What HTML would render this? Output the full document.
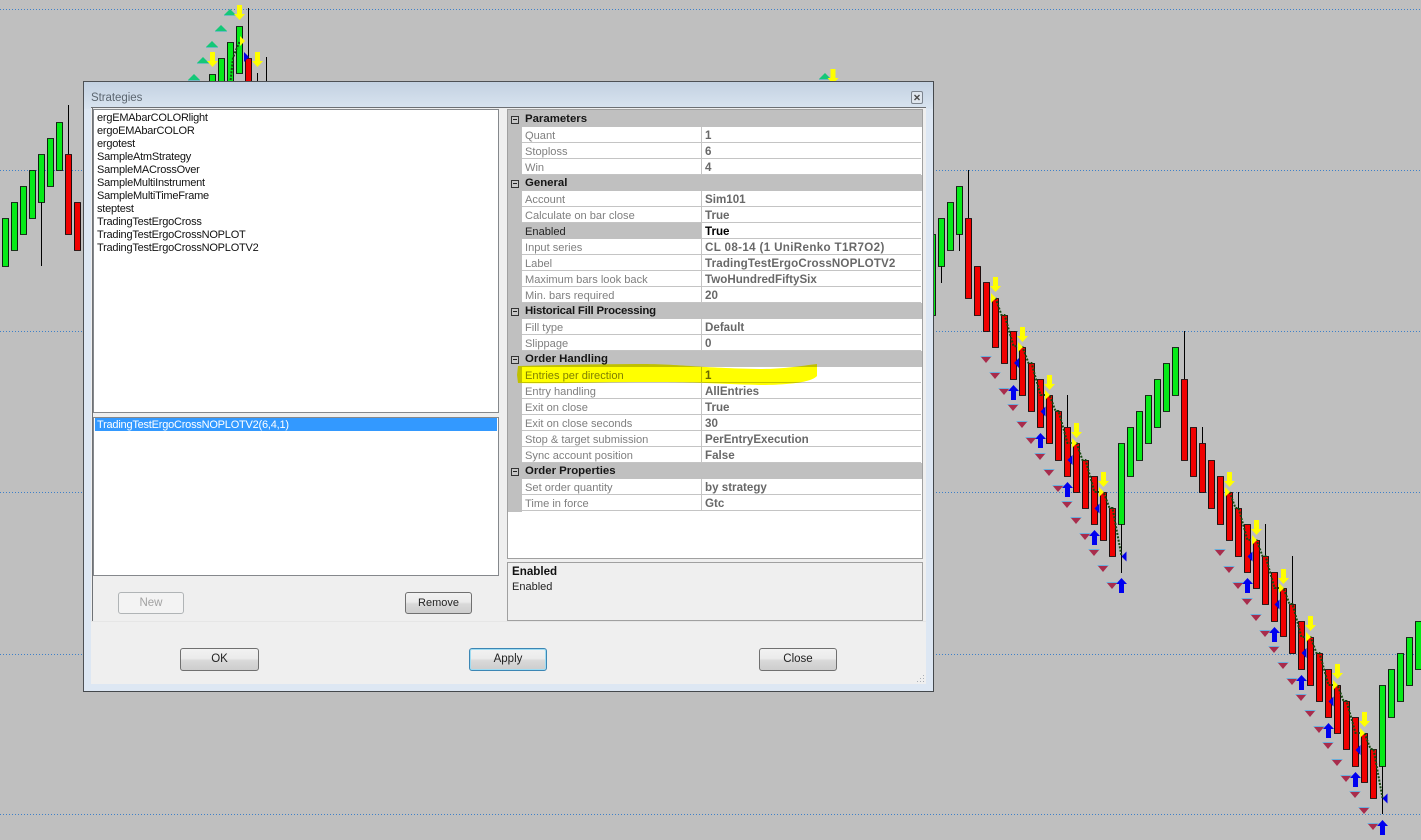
<!DOCTYPE html>
<html><head><meta charset="utf-8"><title>Strategies</title>
<style>
html,body{margin:0;padding:0;background:#bfbfbf}
#r{position:relative;width:1421px;height:840px;overflow:hidden;background:#bfbfbf;font:11px/13px "Liberation Sans",sans-serif;color:#111}
#r svg.c{position:absolute;left:0;top:0}
.a{position:absolute;box-sizing:border-box}
#win{left:83px;top:81px;width:851px;height:611px;border:1px solid #4d5054;background:#dde7f3;border-right-color:#44484c;border-bottom-color:#44484c}
#tb{left:0;top:0;width:849px;height:27px;background:linear-gradient(#c3d1e1,#d9e4f0)}
#cl{left:91px;top:107px;width:835px;height:577px;background:#efefef}
.t{position:absolute;white-space:nowrap}
.lb{background:#fff;border:1px solid #85888c}
.btn{position:absolute;box-sizing:border-box;border:1px solid #707070;border-radius:3px;background:linear-gradient(#f2f2f2 0,#ebebeb 45%,#d9d9d9 55%,#cdcdcd 100%);text-align:center;color:#222;font-size:11.5px}
.row{position:absolute;left:522px;width:399px;height:16px;background:#fff;border-bottom:1px solid #c4c4c4;box-sizing:border-box}
.row i{position:absolute;left:179px;top:0;width:1px;height:16px;background:#c4c4c4}
.row b,.row span{position:absolute;top:2px;line-height:14px;white-space:nowrap}
.row span{left:3px;color:#7f7f7f;font-size:11.1px}
.row b{left:183px;color:#686868;font-size:11.6px}
.cat{position:absolute;left:508px;width:414px;height:16px;background:#c0c0c0}
.cat b{position:absolute;left:17px;top:1px;line-height:15px;font-size:11.4px;color:#151515;white-space:nowrap}
.cat u{position:absolute;left:3px;top:5px;width:8px;height:8px;box-sizing:border-box;border:1px solid #333;background:#c8c8c8}
.cat u:after{content:"";position:absolute;left:1px;top:2px;width:4px;height:1px;background:#222}
</style></head><body><div id="r">
<svg class="c" width="1421" height="840" viewBox="0 0 1421 840">
<defs>
<polygon id="ya" fill="#ffff00" points="-2.5,0 2.5,0 2.5,9 5.5,9 0,15 -5.5,9 -2.5,9"/>
<polygon id="ba" fill="#0000f0" points="-2.5,15 2.5,15 2.5,6 5.5,6 0,0 -5.5,6 -2.5,6"/>
<polygon id="yt" fill="#ffff00" points="-5,-5 0,0 -5,5"/>
<polygon id="bt" fill="#0000e8" points="0,0 5,-5 5,5"/>
<g id="pt"><rect x="-5.5" y="-4" width="11" height="1" fill="#6ab0dc"/><polygon fill="#a82c4c" points="-5,-3 5,-3 0,3"/></g>
<g id="gt"><polygon fill="#14c878" points="-6,3 6,3 0,-3"/><rect x="-6" y="3" width="12" height="1" fill="#70b8c0"/></g>
</defs>
<g stroke="#3e80c8" stroke-dasharray="1 2" fill="none">
<path d="M0 9.5H1421M0 170.5H1421M0 331.5H1421M0 492.5H1421M0 654.5H1421M0 814.5H1421"/>
</g>
<path fill="none" stroke="#000" d="M41.5 202V266M68.5 105V154M248.5 8V58M257.5 73V81M266.5 57V81M941.5 266V283M959.5 234V251M968.5 170V218M1067.5 395V427M1121.5 524V573M1184.5 331V379M1202.5 427V443M1238.5 492V508M1265.5 524V556M1292.5 556V604M1382.5 766V814"/>
<path fill="#06ea18" stroke="#000" stroke-width=".85" d="M2.5 218.5h6v48h-6zM11.5 202.5h6v48h-6zM20.5 186.5h6v48h-6zM29.5 170.5h6v48h-6zM38.5 154.5h6v48h-6zM47.5 138.5h6v48h-6zM56.5 122.5h6v48h-6zM209.5 74.5h6v40h-6zM218.5 58.5h6v50h-6zM227.5 42.5h6v60h-6zM236.5 26.5h6v47h-6zM929.5 234.5h6v81h-6zM938.5 218.5h6v48h-6zM947.5 202.5h6v48h-6zM956.5 186.5h6v48h-6zM1118.5 443.5h6v81h-6zM1127.5 427.5h6v49h-6zM1136.5 411.5h6v49h-6zM1145.5 395.5h6v48h-6zM1154.5 379.5h6v48h-6zM1163.5 363.5h6v48h-6zM1172.5 347.5h6v48h-6zM1379.5 685.5h6v81h-6zM1388.5 669.5h6v48h-6zM1397.5 653.5h6v48h-6zM1406.5 637.5h6v48h-6zM1415.5 621.5h6v48h-6z"/>
<path fill="#f00000" stroke="#000" stroke-width=".85" d="M65.5 154.5h6v80h-6zM74.5 202.5h6v48h-6zM245.5 58.5h6v40h-6zM965.5 218.5h6v80h-6zM974.5 266.5h6v49h-6zM983.5 282.5h6v49h-6zM992.5 298.5h6v49h-6zM1001.5 315.5h6v48h-6zM1010.5 331.5h6v48h-6zM1019.5 347.5h6v48h-6zM1028.5 363.5h6v48h-6zM1037.5 379.5h6v48h-6zM1046.5 395.5h6v48h-6zM1055.5 411.5h6v49h-6zM1064.5 427.5h6v49h-6zM1073.5 443.5h6v49h-6zM1082.5 460.5h6v48h-6zM1091.5 476.5h6v48h-6zM1100.5 492.5h6v48h-6zM1109.5 508.5h6v48h-6zM1181.5 379.5h6v81h-6zM1190.5 427.5h6v49h-6zM1199.5 443.5h6v49h-6zM1208.5 460.5h6v48h-6zM1217.5 476.5h6v48h-6zM1226.5 492.5h6v48h-6zM1235.5 508.5h6v48h-6zM1244.5 524.5h6v48h-6zM1253.5 540.5h6v48h-6zM1262.5 556.5h6v48h-6zM1271.5 572.5h6v49h-6zM1280.5 588.5h6v48h-6zM1289.5 604.5h6v49h-6zM1298.5 621.5h6v48h-6zM1307.5 637.5h6v48h-6zM1316.5 653.5h6v48h-6zM1325.5 669.5h6v48h-6zM1334.5 685.5h6v48h-6zM1343.5 701.5h6v48h-6zM1352.5 717.5h6v49h-6zM1361.5 733.5h6v49h-6zM1370.5 749.5h6v49h-6z"/>
<g fill="none" stroke="#164a10" stroke-width="2" stroke-dasharray="2 1.4">
<polyline points="995.5,298 1001.5,315 1004.5,315 1013.5,346 1022.5,347 1028.5,363 1031.5,363 1040.5,395 1049.5,395 1055.5,411 1058.5,411 1067.5,443 1076.5,443 1082.5,460 1085.5,460 1094.5,492 1103.5,492 1109.5,508 1112.5,508 1121.5,556"/>
<polyline points="1229.5,492 1235.5,508 1238.5,508 1247.5,540 1256.5,540 1262.5,556 1265.5,556 1274.5,588 1283.5,588 1289.5,604 1292.5,604 1301.5,637 1310.5,637 1316.5,653 1319.5,653 1328.5,685 1337.5,685 1343.5,701 1346.5,701 1355.5,733 1364.5,733 1370.5,749 1373.5,749 1382.5,798"/>
<polyline points="239.5,42 236,50 233,58 230.5,81"/>
</g>
<use href="#gt" x="194" y="77"/><use href="#gt" x="203" y="60"/><use href="#gt" x="212" y="44"/><use href="#gt" x="221" y="28"/><use href="#gt" x="230" y="12"/><use href="#gt" x="825" y="76"/>
<use href="#ya" x="212.5" y="52"/><use href="#ya" x="239.5" y="5"/><use href="#ya" x="257.5" y="52"/><use href="#ya" x="833" y="69"/>
<use href="#yt" x="245" y="41"/><use href="#bt" transform="translate(249,57) scale(-1,1)"/>
<use href="#ya" x="995.5" y="277"/><use href="#ya" x="1022.5" y="327"/><use href="#ya" x="1049.5" y="375"/><use href="#ya" x="1076.5" y="423"/><use href="#ya" x="1103.5" y="472"/>
<use href="#ya" x="1229.5" y="472"/><use href="#ya" x="1256.5" y="520"/><use href="#ya" x="1283.5" y="569"/><use href="#ya" x="1310.5" y="616"/><use href="#ya" x="1337.5" y="664"/><use href="#ya" x="1364.5" y="712"/>
<use href="#yt" x="996" y="298"/><use href="#yt" x="1023" y="347"/><use href="#yt" x="1050" y="395"/><use href="#yt" x="1077" y="443"/><use href="#yt" x="1104" y="492"/>
<use href="#yt" x="1230" y="492"/><use href="#yt" x="1257" y="540"/><use href="#yt" x="1284" y="588"/><use href="#yt" x="1311" y="637"/><use href="#yt" x="1338" y="685"/><use href="#yt" x="1365" y="733"/>
<use href="#bt" x="1014" y="363"/><use href="#bt" x="1040.5" y="411.5"/><use href="#bt" x="1067.5" y="460"/><use href="#bt" x="1094.5" y="508.5"/><use href="#bt" x="1121.5" y="556.5"/>
<use href="#bt" x="1247.5" y="556.5"/><use href="#bt" x="1274.5" y="604.5"/><use href="#bt" x="1301.5" y="653"/><use href="#bt" x="1328.5" y="701.5"/><use href="#bt" x="1355.5" y="750"/><use href="#bt" x="1382.5" y="798.5"/>
<use href="#ba" x="1013.5" y="385"/><use href="#ba" x="1040.5" y="433"/><use href="#ba" x="1067.5" y="482"/><use href="#ba" x="1094.5" y="530"/><use href="#ba" x="1121.5" y="578"/>
<use href="#ba" x="1247.5" y="578"/><use href="#ba" x="1274.5" y="627"/><use href="#ba" x="1301.5" y="675"/><use href="#ba" x="1328.5" y="723"/><use href="#ba" x="1355.5" y="772"/><use href="#ba" x="1382.5" y="820"/>
<use href="#pt" x="986" y="360"/><use href="#pt" x="995" y="376"/><use href="#pt" x="1004" y="392"/><use href="#pt" x="1013" y="408"/><use href="#pt" x="1022" y="425"/><use href="#pt" x="1031" y="441"/><use href="#pt" x="1040" y="457"/><use href="#pt" x="1049" y="473"/><use href="#pt" x="1058" y="489"/><use href="#pt" x="1067" y="505"/><use href="#pt" x="1076" y="521"/><use href="#pt" x="1085" y="537"/><use href="#pt" x="1094" y="553"/><use href="#pt" x="1103" y="569"/><use href="#pt" x="1112" y="586"/>
<use href="#pt" x="1220" y="553"/><use href="#pt" x="1229" y="570"/><use href="#pt" x="1238" y="586"/><use href="#pt" x="1247" y="602"/><use href="#pt" x="1256" y="618"/><use href="#pt" x="1265" y="634"/><use href="#pt" x="1274" y="650"/><use href="#pt" x="1283" y="666"/><use href="#pt" x="1292" y="682"/><use href="#pt" x="1301" y="698"/><use href="#pt" x="1310" y="714"/><use href="#pt" x="1319" y="730"/><use href="#pt" x="1328" y="746"/><use href="#pt" x="1337" y="763"/><use href="#pt" x="1346" y="779"/><use href="#pt" x="1355" y="795"/><use href="#pt" x="1364" y="811"/><use href="#pt" x="1373" y="827"/>
</svg>

<div class="a" id="win"><div class="a" id="tb"></div></div>
<div class="t" style="left:91px;top:92px;font-size:11.5px;color:#5c6670;letter-spacing:-.05px">Strategies</div>
<svg class="c" width="1421" height="840">
<rect x="911.5" y="91.5" width="11" height="12" rx="1.5" fill="#dfe6ee" stroke="#7c848e"/>
<path d="M914.5 95l5 5M919.5 95l-5 5" stroke="#4a4a4a" stroke-width="1.4" fill="none"/>
</svg>
<div class="a" id="cl"></div>
<div class="a" style="left:91px;top:107px;width:835px;height:1px;background:#6d7074"></div>
<div class="a" style="left:92px;top:108px;width:1px;height:513px;background:#6f7276"></div>
<div class="a" style="left:91px;top:621px;width:835px;height:1px;background:#e6e6e6"></div>

<div class="a lb" style="left:93px;top:109px;width:406px;height:304px"></div>
<div class="t" style="left:97px;top:112px;line-height:13px;letter-spacing:-.22px;color:#111">ergEMAbarCOLORlight<br>ergoEMAbarCOLOR<br>ergotest<br>SampleAtmStrategy<br>SampleMACrossOver<br>SampleMultiInstrument<br>SampleMultiTimeFrame<br>steptest<br>TradingTestErgoCross<br>TradingTestErgoCrossNOPLOT<br>TradingTestErgoCrossNOPLOTV2</div>

<div class="a lb" style="left:93px;top:417px;width:406px;height:159px"></div>
<div class="a" style="left:95px;top:418px;width:402px;height:13px;background:#3399ff"></div>
<div class="t" style="left:97px;top:419px;line-height:13px;color:#fff;letter-spacing:-.22px">TradingTestErgoCrossNOPLOTV2(6,4,1)</div>

<div class="btn" style="left:118px;top:592px;width:66px;height:22px;line-height:20px;border-color:#b0b4b6;background:#f3f3f3;color:#a2a2a2">New</div>
<div class="btn" style="left:405px;top:592px;width:67px;height:22px;line-height:20px;font-size:11px">Remove</div>
<div class="btn" style="left:180px;top:648px;width:79px;height:23px;line-height:21px">OK</div>
<div class="btn" style="left:469px;top:648px;width:78px;height:23px;line-height:21px;border-color:#3c86b4;box-shadow:inset 0 0 0 1px #9fdcf2">Apply</div>
<div class="btn" style="left:759px;top:648px;width:78px;height:23px;line-height:21px">Close</div>

<div class="a" style="left:507px;top:109px;width:416px;height:450px;background:#fff;border:1px solid #a0a0a0"></div>
<div class="a" style="left:508px;top:110px;width:14px;height:402px;background:#c0c0c0"></div>

<div class="cat" style="top:110px;height:17px"><u style="top:6px"></u><b style="top:2px">Parameters</b></div>
<div class="row" style="top:127px"><span>Quant</span><i></i><b>1</b></div>
<div class="row" style="top:143px"><span>Stoploss</span><i></i><b>6</b></div>
<div class="row" style="top:159px"><span>Win</span><i></i><b>4</b></div>
<div class="cat" style="top:175px"><u></u><b>General</b></div>
<div class="row" style="top:191px"><span>Account</span><i></i><b>Sim101</b></div>
<div class="row" style="top:207px"><span>Calculate on bar close</span><i></i><b>True</b></div>
<div class="row" style="top:223px"><div class="a" style="left:0;top:0;width:179px;height:16px;background:#c0c0c0"></div><span style="color:#222">Enabled</span><i></i><b style="color:#000">True</b></div>
<div class="row" style="top:239px"><span>Input series</span><i></i><b style="letter-spacing:.35px">CL 08-14 (1 UniRenko T1R7O2)</b></div>
<div class="row" style="top:255px"><span>Label</span><i></i><b style="letter-spacing:.14px">TradingTestErgoCrossNOPLOTV2</b></div>
<div class="row" style="top:271px"><span>Maximum bars look back</span><i></i><b>TwoHundredFiftySix</b></div>
<div class="row" style="top:287px"><span>Min. bars required</span><i></i><b>20</b></div>
<div class="cat" style="top:303px"><u></u><b style="letter-spacing:-.2px">Historical Fill Processing</b></div>
<div class="row" style="top:319px"><span>Fill type</span><i></i><b>Default</b></div>
<div class="row" style="top:335px"><span>Slippage</span><i></i><b>0</b></div>
<div class="cat" style="top:351px"><u></u><b>Order Handling</b></div>
<div class="row" style="top:367px"><span>Entries per direction</span><i></i><b>1</b></div>
<div class="row" style="top:383px"><span>Entry handling</span><i></i><b>AllEntries</b></div>
<div class="row" style="top:399px"><span>Exit on close</span><i></i><b>True</b></div>
<div class="row" style="top:415px"><span>Exit on close seconds</span><i></i><b>30</b></div>
<div class="row" style="top:431px"><span>Stop &amp; target submission</span><i></i><b>PerEntryExecution</b></div>
<div class="row" style="top:447px"><span>Sync account position</span><i></i><b>False</b></div>
<div class="cat" style="top:463px"><u></u><b>Order Properties</b></div>
<div class="row" style="top:479px"><span>Set order quantity</span><i></i><b>by strategy</b></div>
<div class="row" style="top:495px"><span>Time in force</span><i></i><b>Gtc</b></div>

<div class="a" style="left:507px;top:562px;width:416px;height:59px;background:#efefef;border:1px solid #a0a0a0"></div>
<div class="t" style="left:512px;top:565px;font-weight:bold;font-size:11.6px;line-height:14px;color:#111">Enabled</div>
<div class="t" style="left:512px;top:580px;line-height:14px;color:#222">Enabled</div>

<svg class="c" width="1421" height="840" style="mix-blend-mode:multiply">
<path fill="#ffff00" d="M518 366C560 365 600 364 640 364C680 364 700 368 760 369C785 369 800 366 817 364L817 376C812 382 790 385 760 385C720 384 700 382 650 382C600 382 560 384 518 383L517 375Z"/>
</svg>
<svg class="c" width="1421" height="840">
<g fill="#a8aeb6"><rect x="923" y="675" width="1" height="1"/><rect x="920" y="678" width="1" height="1"/><rect x="923" y="678" width="1" height="1"/><rect x="917" y="681" width="1" height="1"/><rect x="920" y="681" width="1" height="1"/><rect x="923" y="681" width="1" height="1"/></g>
</svg>
</div></body></html>
